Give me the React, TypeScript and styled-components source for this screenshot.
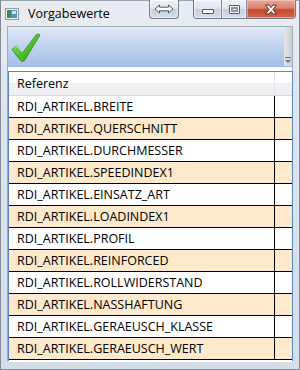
import React from 'react';
import styled, { createGlobalStyle } from 'styled-components';

const GlobalStyle = createGlobalStyle`
    html, body {
        margin: 0;
        padding: 0;
        background: #ffffff;
    }
    * {
        box-sizing: border-box;
    }
`;

const rows = [
    'RDI_ARTIKEL.BREITE',
    'RDI_ARTIKEL.QUERSCHNITT',
    'RDI_ARTIKEL.DURCHMESSER',
    'RDI_ARTIKEL.SPEEDINDEX1',
    'RDI_ARTIKEL.EINSATZ_ART',
    'RDI_ARTIKEL.LOADINDEX1',
    'RDI_ARTIKEL.PROFIL',
    'RDI_ARTIKEL.REINFORCED',
    'RDI_ARTIKEL.ROLLWIDERSTAND',
    'RDI_ARTIKEL.NASSHAFTUNG',
    'RDI_ARTIKEL.GERAEUSCH_KLASSE',
    'RDI_ARTIKEL.GERAEUSCH_WERT',
];

const AppIcon = () => (
    <svg width="14" height="12" viewBox="0 0 14 12">
        <rect x="0.5" y="0.5" width="13" height="11" fill="#eef2f6" stroke="#8f9aa6" />
        <rect x="2" y="2" width="4" height="8" fill="#3b8a5a" />
        <rect x="6" y="2" width="6" height="8" fill="#5d8fc9" />
        <rect x="7" y="3" width="4" height="3" fill="#cfe0f2" />
    </svg>
);

const CheckIcon = () => (
    <svg width="32" height="31" viewBox="0 0 32 31">
        <defs>
            <linearGradient id="chk" x1="0" y1="0" x2="1" y2="1">
                <stop offset="0" stopColor="#9be36f" />
                <stop offset="0.55" stopColor="#4cbf2c" />
                <stop offset="1" stopColor="#2d8f1b" />
            </linearGradient>
        </defs>
        <path
            d="M2 17.5 L6.5 14 L12.5 21 L26.5 2.5 Q28.5 1.2 30 3 L14.5 28.5 Q12.5 30.5 10.5 28.5 Z"
            fill="url(#chk)"
            stroke="#3d9a26"
            strokeWidth="1"
            strokeLinejoin="round"
        />
        <path d="M5 16 L7 14.8 L12.3 20.5" fill="none" stroke="#c8f5a8" strokeWidth="1" opacity="0.8" />
    </svg>
);

const CloseGlyph = () => (
    <svg width="14" height="11" viewBox="0 0 14 11">
        <path
            d="M1.5 1 L5 1 L7 3.5 L9 1 L12.5 1 L9 5.5 L12.5 10 L9 10 L7 7.5 L5 10 L1.5 10 L5 5.5 Z"
            fill="#ffffff"
            stroke="#5b2a22"
            strokeWidth="1"
            strokeLinejoin="round"
        />
    </svg>
);

const SwapGlyph = () => (
    <svg width="20" height="10" viewBox="0 0 20 10">
        <path
            d="M1 5 L5.5 1 L5.5 3.2 L14.5 3.2 L14.5 1 L19 5 L14.5 9 L14.5 6.8 L5.5 6.8 L5.5 9 Z"
            fill="#ffffff"
            stroke="#4d5966"
            strokeWidth="1"
            strokeLinejoin="round"
        />
    </svg>
);

export default function App() {
    return (
        <>
            <GlobalStyle />
            <Window>
                <TitleBar>
                    <TitleIcon>
                        <AppIcon />
                    </TitleIcon>
                    <Title>Vorgabewerte</Title>
                    <SwapButton>
                        <SwapGlyph />
                    </SwapButton>
                    <CaptionGroup>
                        <CaptionButton $width={28}>
                            <MinGlyph />
                        </CaptionButton>
                        <CaptionButton $width={25}>
                            <MaxGlyph />
                        </CaptionButton>
                        <CloseButton>
                            <CloseGlyph />
                        </CloseButton>
                    </CaptionGroup>
                </TitleBar>
                <Client>
                    <Toolbar>
                        <ToolButton>
                            <CheckIcon />
                        </ToolButton>
                        <ToolScroll>
                            <Overflow />
                        </ToolScroll>
                    </Toolbar>
                    <Grid>
                        <HeaderRow>
                            <HeaderCell>Referenz</HeaderCell>
                            <HeaderSpare />
                        </HeaderRow>
                        {rows.map((name, i) => (
                            <Row key={name} $alt={i % 2 === 1}>
                                <Cell>{name}</Cell>
                                <SpareCell />
                            </Row>
                        ))}
                    </Grid>
                </Client>
            </Window>
        </>
    );
}

const Window = styled.div`
    width: 300px;
    height: 370px;
    display: flex;
    flex-direction: column;
    background: linear-gradient(180deg, #e9edf2 0%, #dfe5ec 30%, #d5dde7 100%);
    border: 1px solid #7f8a96;
    border-top-color: #9aa4ae;
    font-family: 'Open Sans', 'Liberation Sans', sans-serif;
`;

const TitleBar = styled.div`
    height: 25px;
    display: flex;
    align-items: flex-start;
    padding-left: 4px;
    padding-right: 3px;
`;

const TitleIcon = styled.div`
    display: flex;
    margin-top: 7px;
`;

const Title = styled.div`
    flex: 1;
    margin-left: 9px;
    margin-top: 4px;
    font-size: 12.5px;
    color: #000000;
    line-height: 17px;
`;

const SwapButton = styled.div`
    width: 30px;
    height: 19px;
    margin-top: -1px;
    margin-right: 14px;
    display: flex;
    align-items: center;
    justify-content: center;
    border: 1px solid #6f7b88;
    border-top: none;
    border-radius: 0 0 4px 4px;
    background: linear-gradient(180deg, #eef2f6 0%, #dde4ec 50%, #c5d0dc 51%, #d5dee8 100%);
    box-shadow: inset 0 0 0 1px rgba(255, 255, 255, 0.6);
`;

const CaptionGroup = styled.div`
    display: flex;
    margin-top: -1px;
    height: 19px;
    border: 1px solid #6f7b88;
    border-top: none;
    border-radius: 0 0 4px 4px;
    overflow: hidden;
`;

const CaptionButton = styled.div<{ $width: number }>`
    width: ${p => p.$width}px;
    height: 100%;
    display: flex;
    align-items: center;
    justify-content: center;
    background: linear-gradient(180deg, #eef2f6 0%, #dde4ec 50%, #c5d0dc 51%, #d5dee8 100%);
    border-right: 1px solid #7d8896;
    box-shadow: inset 0 0 0 1px rgba(255, 255, 255, 0.55);
`;

const MinGlyph = styled.div`
    width: 12px;
    height: 5px;
    margin-top: 5px;
    background: #ffffff;
    border: 1px solid #4d5966;
    border-radius: 1px;
`;

const MaxGlyph = styled.div`
    width: 11px;
    height: 9px;
    border: 1px solid #4d5966;
    background: #ffffff;
    box-shadow: inset 0 0 0 1px #ffffff, inset 0 0 0 3px #8c97a3;
    border-radius: 1px;
`;

const CloseButton = styled.div`
    width: 48px;
    height: 100%;
    display: flex;
    align-items: center;
    justify-content: center;
    background: linear-gradient(180deg, #e7a798 0%, #d9826d 45%, #c5452b 55%, #cf6a4f 100%);
    box-shadow: inset 0 0 0 1px rgba(255, 220, 210, 0.5);
`;

const Client = styled.div`
    flex: 1;
    margin: 0 6px 7px 6px;
    background: #ffffff;
    border: 1px solid #a3adb8;
    border-bottom-color: #ffffff;
    display: flex;
    flex-direction: column;
`;

const Toolbar = styled.div`
    height: 40px;
    display: flex;
    background: linear-gradient(180deg, #dfe9f6 0%, #c3d5ef 45%, #a4bfe9 100%);
    border-radius: 2px 2px 0 0;
    border-bottom: 1px solid #9bb6de;
`;

const ToolButton = styled.div`
    flex: 1;
    display: flex;
    align-items: center;
    padding-left: 2px;
    padding-top: 1px;
`;

const ToolScroll = styled.div`
    width: 8px;
    display: flex;
    align-items: flex-end;
    justify-content: center;
    padding-bottom: 3px;
    background: linear-gradient(90deg, #e5e7ea 0%, #c9cdd2 100%);
`;

const Overflow = styled.div`
    width: 6px;
    height: 6px;
    border-top: 1px solid #6b7784;
    position: relative;
    &::after {
        content: '';
        position: absolute;
        left: 0;
        top: 2px;
        border-left: 3px solid transparent;
        border-right: 3px solid transparent;
        border-top: 3px solid #6b7784;
    }
`;

const Grid = styled.div`
    margin-top: 4px;
    flex: 1;
    margin-right: -1px;
    border: 1px solid #5b87c1;
    border-bottom: none;
    display: flex;
    flex-direction: column;
    background: #ffffff;
`;

const HeaderRow = styled.div`
    height: 24px;
    flex-shrink: 0;
    display: flex;
    background: linear-gradient(180deg, #ffffff 0%, #ffffff 45%, #f1f2f4 50%, #eceef1 100%);
    border-bottom: 1px solid #d5d7da;
`;

const HeaderCell = styled.div`
    flex: 1;
    padding-left: 8px;
    font-size: 12.5px;
    line-height: 23px;
    color: #000000;
    border-right: 1px solid #e2e4e7;
`;

const HeaderSpare = styled.div`
    width: 17px;
`;

const Row = styled.div<{ $alt: boolean }>`
    height: 22px;
    flex-shrink: 0;
    display: flex;
    background: ${p => (p.$alt ? '#fde9cb' : '#ffffff')};
    border-bottom: 1px solid #000000;
`;

const Cell = styled.div`
    flex: 1;
    padding-left: 8px;
    font-size: 12.5px;
    line-height: 21px;
    color: #000000;
    border-right: 1px solid #000000;
    white-space: nowrap;
    overflow: hidden;
`;

const SpareCell = styled.div`
    width: 17px;
`;
